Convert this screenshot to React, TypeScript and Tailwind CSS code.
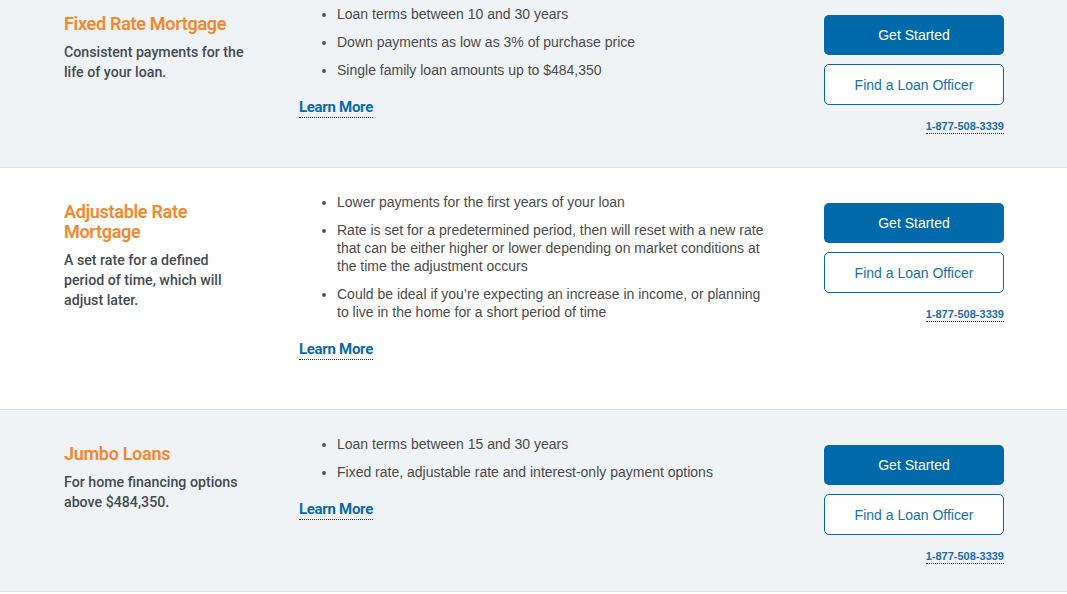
import type { ReactNode } from "react";

type Loan = {
  title: ReactNode;
  desc: string;
  points: string[];
  bg: string;
  box: string;
};

const loans: Loan[] = [
  {
    title: "Fixed Rate Mortgage",
    desc: "Consistent payments for the life of your loan.",
    points: [
      "Loan terms between 10 and 30 years",
      "Down payments as low as 3% of purchase price",
      "Single family loan amounts up to $484,350",
    ],
    bg: "bg-[#f0f3f6]",
    box: "h-[168px] pt-[5px]",
  },
  {
    title: "Adjustable Rate Mortgage",
    desc: "A set rate for a defined period of time, which will adjust later.",
    points: [
      "Lower payments for the first years of your loan",
      "Rate is set for a predetermined period, then will reset with a new rate that can be either higher or lower depending on market conditions at the time the adjustment occurs",
      "Could be ideal if you\u2019re expecting an increase in income, or planning to live in the home for a short period of time",
    ],
    bg: "bg-white",
    box: "h-[242px] pt-[25px]",
  },
  {
    title: "Jumbo Loans",
    desc: "For home financing options above $484,350.",
    points: [
      "Loan terms between 15 and 30 years",
      "Fixed rate, adjustable rate and interest-only payment options",
    ],
    bg: "bg-[#f0f3f6]",
    box: "h-[182px] pt-[25px]",
  },
];

const din = "font-['Roboto','DejaVu_Sans',sans-serif]";
const arial = "font-['Liberation_Sans',Arial,sans-serif]";

// une rangée par type de prêt
const LoanRow = ({ loan }: { loan: Loan }) => (
  <section className={`${loan.bg} ${loan.box} border-b border-[#dde0e3] flex pl-[64px]`}>
    <div className={`w-[190px] mt-[9px] ${din}`}>
      <h2 className="text-[18px] leading-[20px] font-semibold text-[#f7862b] tracking-[-0.3px]">{loan.title}</h2>
      <p className="mt-[8px] w-[184px] text-[14.2px] leading-[20px] font-medium text-[#444b52]">{loan.desc}</p>
    </div>

    <div className={`ml-[45px] w-[470px] ${arial}`}>
      <ul className="list-disc pl-[38px] text-[14px] leading-[18px] text-[#4a4a4a] flex flex-col gap-[10px] marker:text-[#555]">
        {loan.points.map((p) => (
          <li key={p}>{p}</li>
        ))}
      </ul>
      <a
        href="#"
        className={`inline-block mt-[19px] ${din} text-[15px] leading-[19px] font-bold text-[#0a6aa8] border-b border-dotted border-[#333] tracking-[-0.3px]`}
      >
        Learn More
      </a>
    </div>

    <div className={`ml-[55px] w-[180px] mt-[10px] flex flex-col ${arial}`}>
      <button className="h-[40px] rounded-[5px] bg-[#0069a9] text-white text-[14px]">Get Started</button>
      <button className="mt-[9px] h-[41px] pt-[1px] rounded-[5px] bg-white border border-[#0069a9] text-[#1270b0] text-[14px]">
        Find a Loan Officer
      </button>
      <div className="mt-[15px] flex justify-end">
        <a href="#" className="text-[11px] leading-[13px] font-bold text-[#1a6cab] border-b border-dotted border-[#333]">
          1-877-508-3339
        </a>
      </div>
    </div>
  </section>
);

const App = () => {
  return (
    <div className="w-[1067px] h-[594px] overflow-hidden bg-white">
      {loans.map((loan, i) => (
        <LoanRow key={i} loan={loan} />
      ))}
    </div>
  );
};

export default App;
